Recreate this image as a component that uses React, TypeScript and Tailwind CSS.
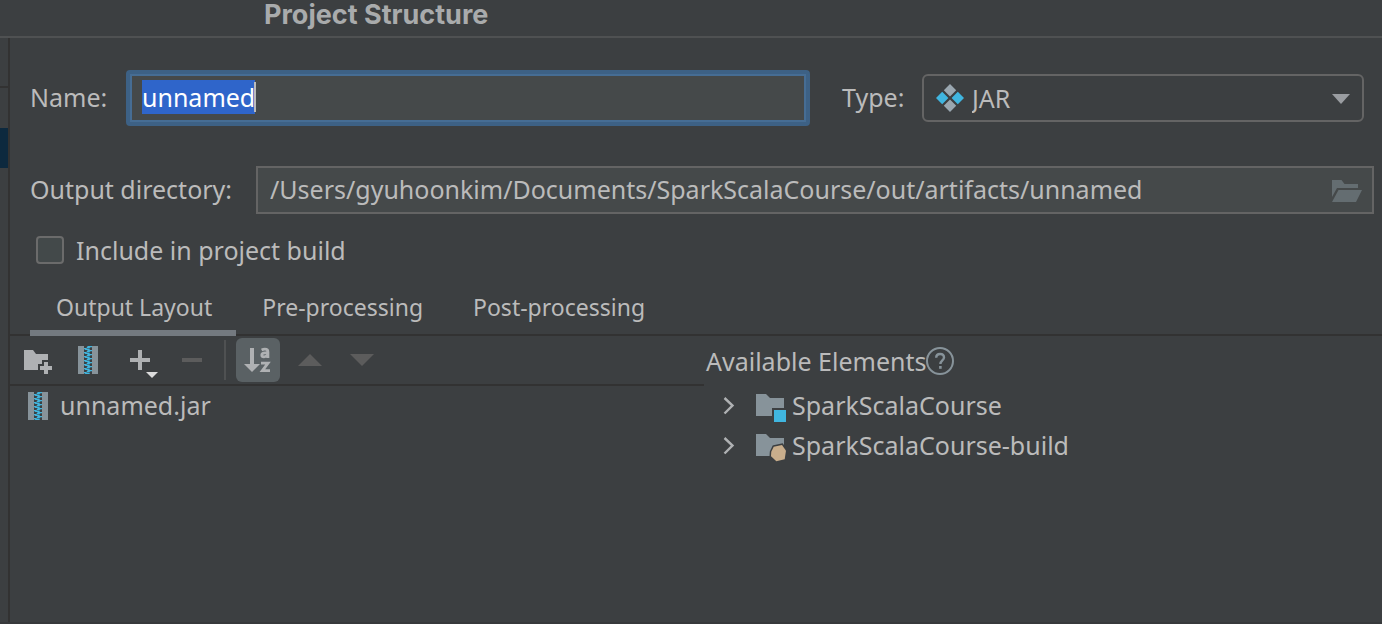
import { useEffect, useRef, useState, type ReactNode } from "react";

function ArchiveIcon() {
  return (
    <svg width="20" height="28" viewBox="0 0 20 28" aria-hidden="true">
      <path d="M0 0h6v28H0zM14 0h6v28h-6z" fill="#87939a" />
      {[0, 4, 8, 12, 16, 20, 24].map((y) => (
        <path
          key={y}
          d={`M10 ${y}h4v1.300h-1.500l-1 .7H9l-.5-.7zM6 ${y + 2}h2l1 .6h2.500l.5.8-1 .6H7.500l-1-.7H6z`}
          fill="#40b6e0"
        />
      ))}
    </svg>
  );
}

function NewFolderIcon() {
  return (
    <svg width="28" height="24" viewBox="0 0 28 24" fill="#afb1b3" aria-hidden="true">
      <path d="M0 0h9l3 4h12v6h-6v4h-4v6H0z" />
      <path d="M20 12h4v4h4v4h-4v4h-4v-4h-4v-4h4z" />
    </svg>
  );
}

function AddIcon() {
  return (
    <svg width="28" height="28" viewBox="0 0 28 28" aria-hidden="true">
      <path d="M8 0h4v8h8v4h-8v8H8v-8H0V8h8z" fill="#afb1b3" />
      <path d="M16 22h12l-6 6z" fill="#dcdcdc" />
    </svg>
  );
}

function SortIcon() {
  return (
    <svg width="28" height="28" viewBox="0 0 28 28" fill="#afb1b3" aria-hidden="true">
      <path d="M6 2h4v16h6l-8 8-8-8h6z" />
      <g fill="none" stroke="#afb1b3" strokeWidth="2.800">
        <path d="M17.600 3.900c1-.5 2-.8 3.300-.8 2.100 0 3 .9 3 2.800v6.100M23.800 6.900h-2.500c-2.300 0-3.500.7-3.500 2.100 0 1.200 1 1.800 2.200 1.800 1.800 0 3.300-1 3.800-2.400" />
        <path d="M17 17.200h7L18.400 24.600H26" />
      </g>
    </svg>
  );
}

function ModuleFolder({ kind }: { kind: "module" | "build" }) {
  return (
    <svg width="30" height="32" viewBox="0 0 30 32" aria-hidden="true">
      <path d="M0 4h10l4 4h14v18H0z" fill="#87939a" />
      {kind === "module" ? (
        <>
          <path d="M16 18h14v14H16z" fill="#3c3f41" />
          <path d="M18 20h12v12H18z" fill="#40b6e0" />
        </>
      ) : (
        <>
          <path
            d="M17.700 16.700l8.300-1.700 4 5.700-1.300 8.600-8.400 2-5.300-5 .3-4.500z"
            fill="#3c3f41"
            stroke="#3c3f41"
            strokeWidth="3"
          />
          <path d="M17.700 16.700l8.300-1.700 4 5.700-1.300 8.600-8.400 2-5.300-5 .3-4.500z" fill="#c9ae8c" />
        </>
      )}
    </svg>
  );
}

function TreeRow({ kind, children }: { kind: "module" | "build"; children: ReactNode }) {
  return (
    <li className="flex h-10 items-center">
      <button type="button" aria-label="Expand" className="flex w-[34px] items-center">
        <svg width="14" height="18" viewBox="0 0 14 18" fill="none" stroke="#afb1b3" strokeWidth="2.400" aria-hidden="true">
          <path d="M2.500 1L10.500 8.500l-8 8" />
        </svg>
      </button>
      <ModuleFolder kind={kind} />
      <span className="ml-1.5 pb-0.5">{children}</span>
    </li>
  );
}

const tabs = ["Output Layout", "Pre-processing", "Post-processing"];

export default function App() {
  const nameRef = useRef<HTMLInputElement>(null);
  const [tab, setTab] = useState(0);

  useEffect(() => {
    nameRef.current?.focus();
    nameRef.current?.select();
  }, []);

  return (
    <div className="flex min-h-screen flex-col border-b-2 border-[#37393b] bg-[#3c3f41] font-['Noto_Sans',sans-serif] text-[25px] leading-[30px] text-[#bbbbbb]">
      <header className="h-[38px] border-b-2 border-[#4f5152] pl-[264px]">
        <h1 className="font-['Inter',sans-serif] text-[27px] leading-[30px] font-bold text-[#a9abac]">Project Structure</h1>
      </header>

      <div className="flex flex-1">
        <aside className="w-2.5 shrink-0 border-r-2 border-[#323232]">
          <div className="h-[50px] border-b-2 border-[#323232]" />
          <div className="mt-10 h-10 bg-[#0d293e]" />
        </aside>

        <main className="flex min-w-0 flex-1 flex-col">
          <div className="flex items-center pt-8 pr-[18px] pl-5">
            <label htmlFor="name" className="w-24 shrink-0 pb-0.5">
              Name:
            </label>
            <div className="relative min-w-0 flex-[684]">
              <input
                id="name"
                ref={nameRef}
                defaultValue="unnamed"
                className="block h-14 w-full rounded-sm border-4 border-[#3d6185] bg-[#45494a] px-3 pb-0.5 text-[#bbbbbb] inset-ring-2 inset-ring-[#466d94] outline-none selection:bg-[#2f65ca] selection:text-white"
              />
              <span className="pointer-events-none absolute top-3 left-32 h-[30px] w-0.5 bg-[#bbbbbb]" />
            </div>
            <label htmlFor="type" className="ml-8 w-20 shrink-0 pb-0.5">
              Type:
            </label>
            <div className="relative min-w-0 flex-[442]">
              <select
                id="type"
                className="block h-12 w-full appearance-none rounded-md border-2 border-[#646464] bg-[#3c3f41] pl-12 outline-none"
              >
                <option>JAR</option>
              </select>
              <svg className="pointer-events-none absolute top-2.5 left-3.5" width="28" height="28" viewBox="0 0 28 28" aria-hidden="true">
                <path d="M14 0l6.200 6.200-6.200 6.200-6.200-6.200zM14 15.600l6.200 6.200-6.200 6.200-6.200-6.200z" fill="#9aa7b0" />
                <path d="M6.200 7.800l6.200 6.200-6.200 6.200L0 14zM21.800 7.800L28 14l-6.200 6.200-6.200-6.200z" fill="#40b6e0" />
              </svg>
              <svg className="pointer-events-none absolute top-5 right-3.5" width="18" height="10" viewBox="0 0 18 10" aria-hidden="true">
                <path d="M0 0h18l-9 10z" fill="#9a9da1" />
              </svg>
            </div>
          </div>

          <div className="mt-10 flex items-center pr-2 pl-5">
            <label htmlFor="output" className="w-[226px] shrink-0 pb-0.5">
              Output directory:
            </label>
            <div className="relative min-w-0 flex-1">
              <input
                id="output"
                defaultValue="/Users/gyuhoonkim/Documents/SparkScalaCourse/out/artifacts/unnamed"
                className="block h-12 w-full border-2 border-[#646464] bg-[#45494a] pr-14 pb-0.5 pl-3 outline-none"
              />
              <button type="button" aria-label="Browse" className="absolute top-3.5 right-3">
                <svg width="30" height="22" viewBox="0 0 30 22" fill="#646d71" aria-hidden="true">
                  <path d="M0 0h9.500l3 4H26v4H5L0 17z" />
                  <path d="M6.500 10H30l-6 12H0z" />
                </svg>
              </button>
            </div>
          </div>

          <label className="mt-[22px] flex h-7 items-center gap-3 self-start pl-[26px]">
            <input
              type="checkbox"
              className="size-7 appearance-none rounded-sm border-2 border-[#6b6b6b] bg-[#43494a] checked:bg-[#466d94]"
            />
            Include in project build
          </label>

          <div role="tablist" className="mt-4 flex h-14 border-b-2 border-[#323232] pl-5 text-[23px]">
            {tabs.map((label, i) => (
              <button
                key={label}
                type="button"
                role="tab"
                aria-selected={tab === i}
                onClick={() => setTab(i)}
                className={
                  tab === i
                    ? "-mb-0.5 border-b-6 border-[#747a80] pt-1 pr-6 pl-[26px]"
                    : "-mb-0.5 border-b-6 border-transparent pt-1 pr-6 pl-[26px]"
                }
              >
                {label}
              </button>
            ))}
          </div>

          <div className="flex flex-1">
            <section className="w-[694px] shrink-0">
              <div role="toolbar" className="flex h-[50px] items-center border-b-2 border-[#323232] pl-3.5">
                <button type="button" aria-label="New folder" className="flex w-[54px] pt-1">
                  <NewFolderIcon />
                </button>
                <button type="button" aria-label="New archive" className="flex w-[52px]">
                  <ArchiveIcon />
                </button>
                <button type="button" aria-label="Add" className="flex w-[52px] pt-2">
                  <AddIcon />
                </button>
                <button type="button" aria-label="Remove" className="flex w-[42px]">
                  <svg width="20" height="4" viewBox="0 0 20 4" aria-hidden="true">
                    <path d="M0 0h20v4H0z" fill="#5c5c5c" />
                  </svg>
                </button>
                <div className="mr-2.5 h-10 w-0.5 bg-[#4f5152]" />
                <button type="button" aria-label="Sort alphabetically" className="mr-[18px] flex size-11 items-center justify-center rounded-md bg-[#5a6164]">
                  <SortIcon />
                </button>
                <button type="button" aria-label="Move up" className="flex w-[52px]">
                  <svg width="24" height="12" viewBox="0 0 24 12" aria-hidden="true">
                    <path d="M0 12h24L12 0z" fill="#5c5c5c" />
                  </svg>
                </button>
                <button type="button" aria-label="Move down" className="flex">
                  <svg width="24" height="12" viewBox="0 0 24 12" aria-hidden="true">
                    <path d="M0 0h24L12 12z" fill="#5c5c5c" />
                  </svg>
                </button>
              </div>
              <ul>
                <li className="flex h-10 items-center gap-3 pl-[18px]">
                  <ArchiveIcon />
                  <span className="pb-0.5">unnamed.jar</span>
                </li>
              </ul>
            </section>

            <section className="min-w-0 flex-1">
              <div className="flex h-[50px] items-center pl-0.5">
                <h2>Available Elements</h2>
                <button type="button" aria-label="Help" className="flex">
                  <svg width="28" height="28" viewBox="0 0 28 28" fill="none" stroke="#87939a" aria-hidden="true">
                    <circle cx="14" cy="14" r="13" strokeWidth="2" />
                    <path d="M10.200 10.800c0-2.300 1.600-3.800 3.900-3.800s3.900 1.400 3.900 3.500c0 2.800-3.600 3-3.600 6.500" strokeWidth="2.400" />
                    <path d="M14.400 19v2.800" strokeWidth="2.600" />
                  </svg>
                </button>
              </div>
              <ul className="pl-[18px]">
                <TreeRow kind="module">SparkScalaCourse</TreeRow>
                <TreeRow kind="build">SparkScalaCourse-build</TreeRow>
              </ul>
            </section>
          </div>
        </main>
      </div>
    </div>
  );
}
